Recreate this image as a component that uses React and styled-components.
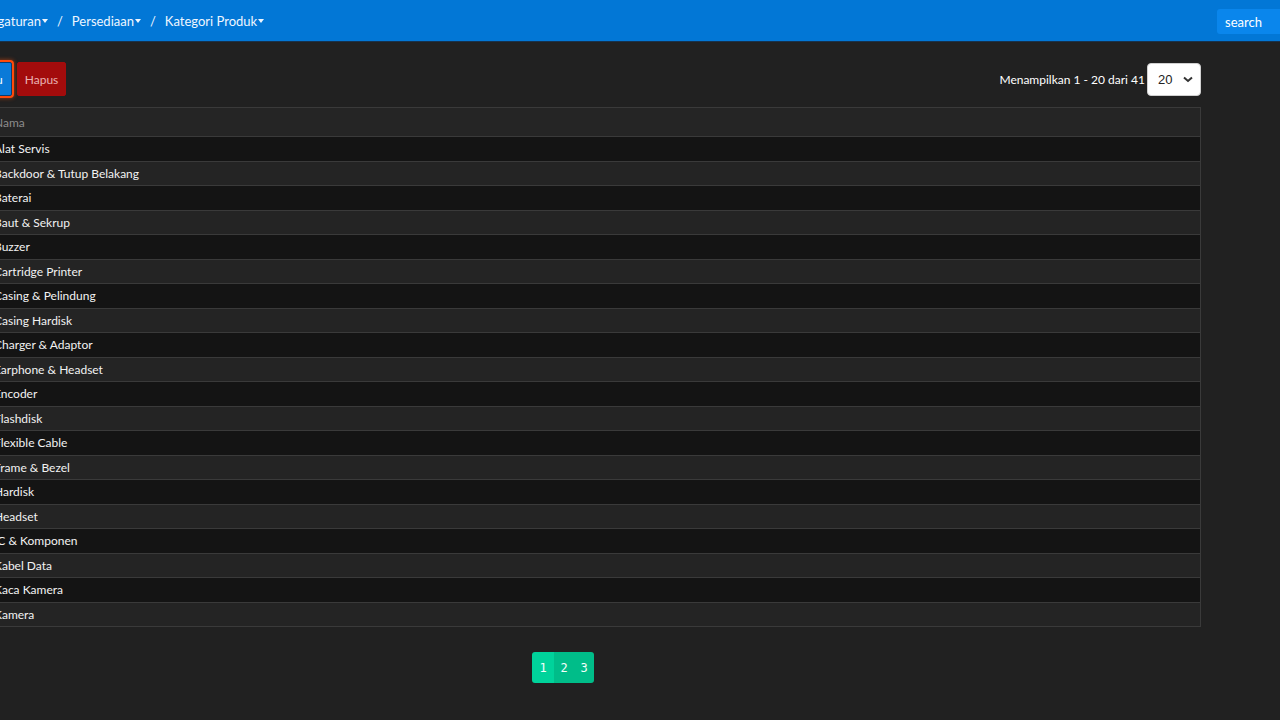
import React from 'react';
import styled, { createGlobalStyle } from 'styled-components';

const GlobalStyle = createGlobalStyle`
    html, body {
        margin: 0;
        padding: 0;
        background: #212121;
        overflow: hidden;
    }

    body {
        font-family: Lato, "Open Sans", sans-serif;
        font-size: 12px;
        color: #f2f2f2;
    }
`;

const categories = [
    'Alat Servis',
    'Backdoor & Tutup Belakang',
    'Baterai',
    'Baut & Sekrup',
    'Buzzer',
    'Cartridge Printer',
    'Casing & Pelindung',
    'Casing Hardisk',
    'Charger & Adaptor',
    'Earphone & Headset',
    'Encoder',
    'Flashdisk',
    'Flexible Cable',
    'Frame & Bezel',
    'Hardisk',
    'Headset',
    'IC & Komponen',
    'Kabel Data',
    'Kaca Kamera',
    'Kamera',
];

const Page = styled.div`
    margin-left: -90px;
    width: 1390px;
    min-height: 720px;
`;

const Navbar = styled.nav`
    height: 41px;
    display: flex;
    align-items: center;
    justify-content: space-between;
    padding-left: 66px;
    background: #0277d6;
    border-bottom: 1px solid #17324d;
`;

const Crumbs = styled.div`
    display: flex;
    align-items: center;
    color: #eef6ff;
    font-size: 13px;
`;

const Crumb = styled.span`
    display: inline-flex;
    align-items: center;

    &::after {
        content: '';
        margin-left: 1px;
        border-left: 3.5px solid transparent;
        border-right: 3.5px solid transparent;
        border-top: 4px solid #eef6ff;
    }
`;

const Slash = styled.span`
    margin: 0 9px;
`;

const SearchButton = styled.button`
    align-self: stretch;
    margin: 9px 0 7px;
    width: 83px;
    padding: 0 8px;
    text-align: left;
    border: none;
    border-radius: 3px 0 0 3px;
    background: #0a86ec;
    color: #ffffff;
    font-family: Lato, sans-serif;
    font-size: 13px;
`;

const Content = styled.main`
    padding: 20px 99px 0 15px;
`;

const Toolbar = styled.div`
    display: flex;
    align-items: center;
    justify-content: space-between;
    height: 34px;
`;

const Actions = styled.div`
    display: flex;
    gap: 5px;
`;

const Button = styled.button`
    height: 34px;
    padding: 0 ${p => (p.$variant === 'danger' ? '7px' : '8px')};
    border-radius: 2px;
    font-family: Lato, sans-serif;
    font-size: 12px;
    display: inline-flex;
    align-items: center;
    border: 1px solid ${p => (p.$variant === 'danger' ? '#a50c0c' : '#0b3e70')};
    background: ${p => (p.$variant === 'danger' ? '#a30c0c' : '#0a7ad8')};
    color: ${p => (p.$variant === 'danger' ? '#e9b3b3' : '#ffffff')};
    box-shadow: ${p => (p.$focused ? '0 0 0 2px #ff4a0a, 0 0 4px 2px rgba(255, 80, 10, 0.6)' : 'none')};
`;

const Info = styled.div`
    display: flex;
    align-items: center;
    gap: 2px;
    color: #ffffff;
    font-size: 12px;
`;

const SelectWrap = styled.div`
    position: relative;
    width: 54px;
    height: 33px;

    svg {
        position: absolute;
        right: 8px;
        top: 13px;
        pointer-events: none;
    }
`;

const Select = styled.select`
    appearance: none;
    width: 100%;
    height: 100%;
    padding: 0 0 0 10px;
    border: 1px solid #d0d0d0;
    border-radius: 4px;
    background: #ffffff;
    color: #222222;
    font-family: "Liberation Sans", Arial, sans-serif;
    font-size: 13px;
`;

const Table = styled.table`
    width: 100%;
    margin-top: 11px;
    border-collapse: collapse;
    border: 1px solid #3a3a3a;
`;

const HeadCell = styled.th`
    height: 28px;
    padding: 0 0 0 ${p => (p.$check ? '12px' : '9px')};
    width: ${p => (p.$check ? '47px' : 'auto')};
    text-align: left;
    font-weight: normal;
    color: #8c8c8c;
    background: #252525;
    border-bottom: 1px solid #3a3a3a;
`;

const Row = styled.tr`
    background: ${p => (p.$odd ? '#141414' : '#242424')};
    border-top: 1px solid #3a3a3a;
`;

const Cell = styled.td`
    height: 23.5px;
    padding: 0 0 0 ${p => (p.$check ? '12px' : '9px')};
    color: #f2f2f2;
    font-size: 12px;
`;

const Check = styled.span`
    display: inline-block;
    width: 12px;
    height: 12px;
    border: 1px solid #777;
    border-radius: 2px;
    vertical-align: middle;
`;

const Pagination = styled.div`
    display: flex;
    justify-content: center;
    margin-top: 25px;
`;

const PageGroup = styled.div`
    display: flex;
    border-radius: 3px;
    overflow: hidden;
`;

const PageButton = styled.span`
    width: ${p => (p.$first ? '22px' : '20px')};
    height: 31px;
    display: flex;
    align-items: center;
    justify-content: center;
    background: ${p => (p.$active ? '#00d39b' : '#00bd89')};
    color: #f4fffb;
    font-family: "DejaVu Sans Mono", monospace;
    font-size: 12px;
`;

export default function App() {
    return (
        <>
            <GlobalStyle />
            <Page>
                <Navbar>
                    <Crumbs>
                        <Crumb>Pengaturan</Crumb>
                        <Slash>/</Slash>
                        <Crumb>Persediaan</Crumb>
                        <Slash>/</Slash>
                        <Crumb>Kategori Produk</Crumb>
                    </Crumbs>
                    <SearchButton>search</SearchButton>
                </Navbar>

                <Content>
                    <Toolbar>
                        <Actions>
                            <Button $focused>Tambah Baru</Button>
                            <Button $variant="danger">Hapus</Button>
                        </Actions>
                        <Info>
                            <span>Menampilkan 1 - 20 dari 41</span>
                            <SelectWrap>
                                <Select defaultValue="20">
                                    <option>10</option>
                                    <option>20</option>
                                    <option>50</option>
                                </Select>
                                <svg width="10" height="7" viewBox="0 0 10 7">
                                    <path d="M1 1.5 L5 5 L9 1.5" fill="none" stroke="#333" strokeWidth="2" />
                                </svg>
                            </SelectWrap>
                        </Info>
                    </Toolbar>

                    <Table>
                        <thead>
                            <tr>
                                <HeadCell $check><Check /></HeadCell>
                                <HeadCell>Nama</HeadCell>
                            </tr>
                        </thead>
                        <tbody>
                            {categories.map((name, i) => (
                                <Row key={name} $odd={i % 2 === 0}>
                                    <Cell $check><Check /></Cell>
                                    <Cell>{name}</Cell>
                                </Row>
                            ))}
                        </tbody>
                    </Table>

                    <Pagination>
                        <PageGroup>
                            <PageButton $active $first>1</PageButton>
                            <PageButton>2</PageButton>
                            <PageButton>3</PageButton>
                        </PageGroup>
                    </Pagination>
                </Content>
            </Page>
        </>
    );
}
